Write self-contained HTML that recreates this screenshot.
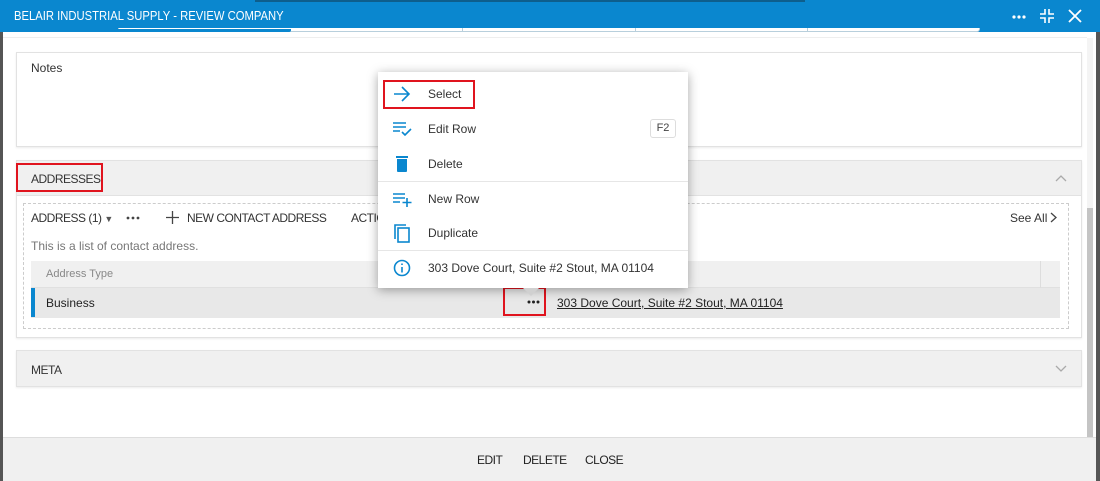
<!DOCTYPE html>
<html><head><style>
*{box-sizing:border-box;margin:0;padding:0}
body{width:1100px;height:481px;overflow:hidden;background:#fff;font-family:"Liberation Sans",sans-serif;position:relative;color:#333}
.a{position:absolute}
.t{font-size:12px;color:#333;white-space:nowrap}
.u{letter-spacing:-0.5px}
.mi{position:absolute;left:0;width:310px;height:35px}
.mi span{position:absolute;left:50px;top:10px;font-size:12px;color:#333}
.mi svg{position:absolute;left:15px;top:8px}
</style></head><body>
<div class="a" style="left:0;top:0;width:3px;height:481px;background:#555"></div>
<div class="a" style="right:0;top:0;width:4px;height:481px;background:#555"></div>
<div class="a" style="left:0;top:0;width:1100px;height:32px;background:#0a87cf"></div>
<div class="a" style="left:255px;top:0;width:550px;height:2px;background:#0e5e8c"></div>
<div class="a t" style="left:14px;top:9px;color:#fff;font-size:12.5px;transform:scaleX(0.9);transform-origin:left">BELAIR INDUSTRIAL SUPPLY - REVIEW COMPANY</div>
<svg class="a" style="left:1012px;top:15px" width="14" height="4"><circle cx="2" cy="2" r="1.6" fill="#fff"/><circle cx="7" cy="2" r="1.6" fill="#fff"/><circle cx="12" cy="2" r="1.6" fill="#fff"/></svg>
<svg class="a" style="left:1040px;top:9px" width="14" height="14" stroke="#fff" stroke-width="1.6" fill="none"><path d="M5 0V5H0M9 0V5H14M5 14V9H0M9 14V9H14"/></svg>
<svg class="a" style="left:1068px;top:9px" width="14" height="14" stroke="#fff" stroke-width="1.8"><path d="M1 1L13 13M13 1L1 13"/></svg>
<div class="a" style="left:118px;top:28px;width:862px;height:4px;border:1px solid #b8cfdc;border-top:none;border-radius:0 0 3px 3px;background:#fff"></div>
<div class="a" style="left:118px;top:29px;width:173px;height:3px;background:#0a87cf;border-radius:0 0 2px 2px"></div>
<div class="a" style="left:462px;top:28px;width:1px;height:4px;background:#b8cfdc"></div>
<div class="a" style="left:635px;top:28px;width:1px;height:4px;background:#b8cfdc"></div>
<div class="a" style="left:807px;top:28px;width:1px;height:4px;background:#b8cfdc"></div>
<div class="a" style="left:3px;top:37px;width:1084px;height:1px;background:#eee"></div>
<div class="a" style="left:16px;top:52px;width:1066px;height:95px;border:1px solid #e2e2e2;box-shadow:0 1px 2px rgba(0,0,0,.08)"></div>
<div class="a t" style="left:31px;top:61px">Notes</div>
<div class="a" style="left:16px;top:160px;width:1066px;height:178px;border:1px solid #e2e2e2;box-shadow:0 1px 2px rgba(0,0,0,.08)"></div>
<div class="a" style="left:17px;top:161px;width:1064px;height:35px;background:#f0f0f0;border-bottom:1px solid #e2e2e2"></div>
<div class="a" style="left:16px;top:163px;width:87px;height:29px;border:2px solid #e0141e"></div>
<div class="a t u" style="left:31px;top:172px">ADDRESSES</div>
<svg class="a" style="left:1055px;top:174px" width="12" height="8" stroke="#aaa" stroke-width="1.3" fill="none"><path d="M1 7L6 2L11 7"/></svg>
<div class="a" style="left:23px;top:203px;width:1046px;height:126px;border:1px dashed #ccc"></div>
<div class="a t u" style="left:31px;top:211px">ADDRESS (1) <span style="font-size:9px;color:#555">▼</span></div>
<svg class="a" style="left:126px;top:216px" width="14" height="4"><circle cx="2" cy="2" r="1.4" fill="#444"/><circle cx="7" cy="2" r="1.4" fill="#444"/><circle cx="12" cy="2" r="1.4" fill="#444"/></svg>
<svg class="a" style="left:166px;top:211px" width="13" height="13" stroke="#444" stroke-width="1.3"><path d="M6.5 0V13M0 6.5H13"/></svg>
<div class="a t u" style="left:187px;top:211px">NEW CONTACT ADDRESS</div>
<div class="a t u" style="left:351px;top:211px">ACTIONS</div>
<div class="a t" style="left:1010px;top:211px">See All</div>
<svg class="a" style="left:1050px;top:212px" width="7" height="11" stroke="#444" stroke-width="1.3" fill="none"><path d="M1 1L6 5.5L1 10"/></svg>
<div class="a t" style="left:31px;top:239px;color:#777">This is a list of contact address.</div>
<div class="a" style="left:31px;top:261px;width:1029px;height:27px;background:#f0f0f0;border-bottom:1px solid #e0e0e0"></div>
<div class="a" style="left:1040px;top:261px;width:1px;height:27px;background:#ddd"></div>
<div class="a t" style="left:46px;top:268px;color:#888;font-size:11px">Address Type</div>
<div class="a" style="left:31px;top:288px;width:1029px;height:30px;background:#e8e8e8"></div>
<div class="a" style="left:31px;top:288px;width:4px;height:29px;background:#0a87cf"></div>
<div class="a t" style="left:46px;top:296px;color:#222">Business</div>
<div class="a" style="left:503px;top:287px;width:43px;height:29px;border:2px solid #e0141e"></div>
<svg class="a" style="left:527px;top:300px" width="13" height="4"><circle cx="2" cy="2" r="1.5" fill="#222"/><circle cx="6.5" cy="2" r="1.5" fill="#222"/><circle cx="11" cy="2" r="1.5" fill="#222"/></svg>
<div class="a t" style="left:557px;top:296px;color:#222;text-decoration:underline">303 Dove Court, Suite #2 Stout, MA 01104</div>
<div class="a" style="left:16px;top:350px;width:1066px;height:37px;background:#f0f0f0;border:1px solid #e2e2e2;box-shadow:0 1px 2px rgba(0,0,0,.08)"></div>
<div class="a t u" style="left:31px;top:363px">META</div>
<svg class="a" style="left:1055px;top:365px" width="12" height="8" stroke="#aaa" stroke-width="1.3" fill="none"><path d="M1 1L6 6L11 1"/></svg>
<div class="a" style="left:1087px;top:38px;width:6px;height:399px;background:#f4f4f4"></div>
<div class="a" style="left:1087px;top:208px;width:6px;height:229px;background:#c4c4c4"></div>
<div class="a" style="left:3px;top:437px;width:1093px;height:44px;background:#f0f0f0;border-top:1px solid #ddd"></div>
<div class="a t u" style="left:477px;top:453px;color:#222">EDIT</div>
<div class="a t u" style="left:523px;top:453px;color:#222">DELETE</div>
<div class="a t u" style="left:585px;top:453px;color:#222">CLOSE</div>
<div class="a" style="left:378px;top:72px;width:310px;height:216px;background:#fff;box-shadow:0 2px 10px rgba(0,0,0,.35)">
 <div class="mi" style="top:5px"><svg width="18" height="18" stroke="#0a87cf" stroke-width="1.6" fill="none"><path d="M1 9H16M9 2L16 9L9 16"/></svg><span>Select</span></div>
 <div class="a" style="left:5px;top:8px;width:92px;height:29px;border:2px solid #e0141e"></div>
 <div class="mi" style="top:40px"><svg width="20" height="18" stroke="#0a87cf" stroke-width="1.6" fill="none"><path d="M0 3H13M0 7H13M0 11H7M9 12L12 15L18 9"/></svg><span>Edit Row</span>
  <div class="a" style="left:272px;top:7px;width:26px;height:19px;border:1px solid #ddd;border-radius:3px;font-size:11px;text-align:center;line-height:17px;color:#444">F2</div></div>
 <div class="mi" style="top:75px"><svg width="18" height="18" fill="#0a87cf"><rect x="3" y="1" width="12" height="2"/><path d="M4 4H14V16Q14 17 13 17H5Q4 17 4 16Z"/></svg><span>Delete</span></div>
 <div class="a" style="left:0;top:109px;width:310px;height:1px;background:#e6e6e6"></div>
 <div class="mi" style="top:110px"><svg width="20" height="18" stroke="#0a87cf" stroke-width="1.6" fill="none"><path d="M0 4H12M0 8H12M0 12H7M14 8V17M9.5 12.5H18.5"/></svg><span>New Row</span></div>
 <div class="mi" style="top:144px"><svg width="18" height="20" stroke="#0a87cf" stroke-width="1.6" fill="none"><path d="M2 15V1H13"/><rect x="5" y="4" width="11" height="14"/></svg><span>Duplicate</span></div>
 <div class="a" style="left:0;top:178px;width:310px;height:1px;background:#e6e6e6"></div>
 <div class="mi" style="top:179px"><svg width="18" height="18" stroke="#0a87cf" stroke-width="1.6" fill="none"><circle cx="9" cy="9" r="7.5"/><path d="M9 8V13.5M9 4.5V6"/></svg><span>303 Dove Court, Suite #2 Stout, MA 01104</span></div>
</div>
<div class="a" style="left:523px;top:288px;width:0;height:0;border-left:8px solid transparent;border-right:8px solid transparent;border-top:8px solid #d0d0d0"></div>
</body></html>
